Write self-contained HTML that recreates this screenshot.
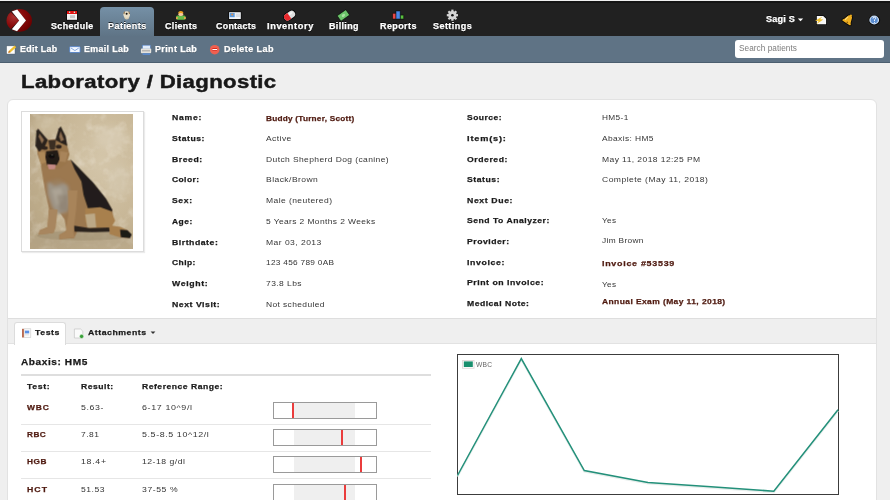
<!DOCTYPE html>
<html><head><meta charset="utf-8"><style>
html,body{margin:0;padding:0;}
body{width:890px;height:500px;overflow:hidden;position:relative;background:#efefef;font-family:"Liberation Sans",sans-serif;}
.a{position:absolute;}
.t{position:absolute;transform-origin:0 0;white-space:nowrap;line-height:1;font-family:"Liberation Sans",sans-serif;}
#topbar{left:0;top:0;width:890px;height:36px;background:#212121;}
#topline{left:0;top:0;width:890px;height:1px;background:#f0f0f0;}
#topline2{left:0;top:1px;width:890px;height:2px;background:#151515;}
#ptab{left:100px;top:7px;width:54px;height:29px;border-radius:4px 4px 0 0;background:linear-gradient(#7590a6,#5f7486);}
#toolbar{left:0;top:36px;width:890px;height:26px;background:#5f7385;border-top:0;}
#toolbar2{left:0;top:62px;width:890px;height:1px;background:#4b5e6f;}
#search{left:735px;top:40px;width:149px;height:18px;background:#fff;border-radius:3px;}
#panel{left:7px;top:99px;width:868px;height:420px;background:#fff;border:1px solid #e2e2e2;border-radius:6px;}
#frame{left:21px;top:111px;width:121px;height:139px;background:#fff;border:1px solid #dcdcdc;box-shadow:1px 1px 1px rgba(0,0,0,.08);}
#tabbar{left:8px;top:318px;width:868px;height:24px;background:#efefef;border-top:1px solid #dedede;border-bottom:1px solid #e2e2e2;}
#tabtests{left:14px;top:322px;width:50px;height:22px;background:#fff;border:1px solid #dcdcdc;border-bottom:0;border-radius:3px 3px 0 0;}
#hr{left:21px;top:374px;width:410px;height:2px;background:#dedede;}
.sep{left:21px;width:410px;height:1px;background:#e6e6e6;}
.bar{left:273px;width:102px;height:15px;border:1px solid #9a9a9a;background:#fff;}
.rng{position:absolute;left:20.3px;width:61px;top:0;height:15px;background:#efefef;}
.mk{position:absolute;top:0;width:2px;height:15px;background:#ea3c3c;}
#chart{left:457px;top:354px;width:380px;height:139px;border:1px solid #3a3a3a;background:#fff;}

</style></head><body>
<div class="a" id="topbar"></div>
<div class="a" id="topline"></div>
<div class="a" id="topline2"></div>
<div class="a" id="ptab"></div>
<svg class="a" style="left:0;top:0" width="40" height="36" viewBox="0 0 40 36">
<defs><radialGradient id="lg" cx="0.3" cy="0.35" r="0.75"><stop offset="0" stop-color="#a83232"/><stop offset="0.5" stop-color="#8a0c0c"/><stop offset="1" stop-color="#6a0000"/></radialGradient></defs>
<ellipse cx="19.25" cy="20.45" rx="12.75" ry="11.35" fill="url(#lg)"/>
<polygon points="10.8,11.9 16.6,9.3 26.2,20.4 16.6,31.6 10.8,29 19.2,20.4" fill="#111" opacity=".8"/>
<polygon points="11.8,11.5 17.2,9.5 26,20.4 17,31.2 11.8,29.3 19.2,20.4" fill="#fff"/>
</svg>
<!-- nav icons -->
<svg class="a" style="left:60px;top:6px" width="420" height="18" viewBox="60 6 420 18">
 <!-- calendar -->
 <rect x="66.2" y="10.3" width="11.5" height="10.2" fill="#000" opacity=".7"/>
 <rect x="67" y="11" width="10" height="3" fill="#e01010"/>
 <rect x="67" y="14" width="10" height="5.8" fill="#f4f4f4"/>
 <circle cx="69.6" cy="12.2" r=".8" fill="#bfe"/><circle cx="74.4" cy="12.2" r=".8" fill="#bfe"/>
 <rect x="70" y="15.2" width="5" height="3" fill="#c8c8c8"/>
 <!-- patients -->
 <path d="M124 17 Q124.6 19.6 126.7 19.6 Q128.8 19.6 129.4 17 Z" fill="#d8ccb0"/>
 <circle cx="126.7" cy="14.6" r="3.3" fill="#e8dec6"/>
 <path d="M123.4 13.8 Q123.6 11.4 125 11.3 L124.4 14.2 Z M130 13.8 Q129.8 11.4 128.4 11.3 L129 14.2 Z" fill="#8a6a40"/>
 <circle cx="126.6" cy="13.7" r="1" fill="#111"/>
 <!-- clients -->
 <rect x="176" y="15.6" width="9.7" height="4.2" rx="1.6" fill="#66bb48"/>
 <rect x="176" y="17" width="1.7" height="2" rx=".6" fill="#f0a050"/><rect x="184" y="17" width="1.7" height="2" rx=".6" fill="#f0a050"/>
 <ellipse cx="180.8" cy="14.2" rx="2.4" ry="1.9" fill="#f6c8a0"/>
 <path d="M178.2 13.4 Q178 10.9 180.8 10.9 Q183.6 10.9 183.4 13.4 Q181 12.4 178.2 13.4 Z" fill="#f0a020"/>
 <!-- contacts -->
 <rect x="228.3" y="11.5" width="13.2" height="8.2" fill="#000" opacity=".75"/>
 <rect x="229.1" y="12.2" width="11.7" height="6.8" fill="#f2f4f8"/>
 <rect x="229.7" y="13" width="5" height="4.2" fill="#5a9ae0"/>
 <circle cx="232.2" cy="14.6" r="1.1" fill="#d89050"/>
 <rect x="235.8" y="13.5" width="4.2" height="3.5" fill="#d8dce4"/>
 <!-- inventory pill -->
 <g transform="translate(289.6 15.6) rotate(-35)">
  <rect x="-6.9" y="-4.3" width="13.8" height="8.6" rx="4.3" fill="#000" opacity=".85"/>
  <rect x="-6" y="-3.4" width="12" height="6.8" rx="3.4" fill="#dedede"/>
  <path d="M-2.6 -3.4 L-0.4 -3.4 L-0.4 3.4 L-2.6 3.4 A3.4 3.4 0 0 1 -2.6 -3.4 Z" fill="#e8282c"/>
  <ellipse cx="2.2" cy="-1.2" rx="2.2" ry="1" fill="#f4f4f4"/>
 </g>
 <!-- billing -->
 <g transform="translate(343.4 15.4) rotate(-35)">
  <rect x="-5.3" y="-3.3" width="10.6" height="6.6" fill="#6cc46a" stroke="#000" stroke-opacity=".6" stroke-width=".9"/>
  <ellipse cx="0" cy="0" rx="1.8" ry="1.3" fill="#a8e0a0"/>
 </g>
 <!-- reports -->
 <g stroke="#000" stroke-opacity=".55" stroke-width=".9">
 <rect x="392.6" y="13.3" width="3.4" height="5.7" fill="#e84848"/>
 <rect x="400.2" y="15.1" width="3.5" height="3.9" fill="#5cc040"/>
 <rect x="396" y="11" width="4.2" height="8" fill="#4a88e8"/>
 </g>
 <!-- settings gear -->
 <g transform="translate(452.4 15.2)" fill="#d4d4d4">
  <circle r="4.2" fill="#d4d4d4"/>
  <g><rect x="-1.1" y="-5.6" width="2.2" height="11.2"/><rect x="-5.6" y="-1.1" width="11.2" height="2.2"/>
  <rect x="-1.1" y="-5.6" width="2.2" height="11.2" transform="rotate(45)"/><rect x="-1.1" y="-5.6" width="2.2" height="11.2" transform="rotate(-45)"/></g>
  <circle r="1.3" fill="#111"/>
 </g>
</svg>
<!-- toolbar -->
<div class="a" id="toolbar"></div>
<div class="a" id="toolbar2"></div>
<svg class="a" style="left:0;top:36px" width="230" height="26" viewBox="0 36 230 26">
 <!-- edit -->
 <rect x="6.6" y="45.9" width="8.4" height="8.1" fill="#fdfdfd" stroke="#4a5a6a" stroke-width=".4"/>
 <path d="M8.2 52.8 L9 50.8 L14.6 45.6 L16.2 47.2 L10.6 52.2 Z" fill="#f0c030"/>
 <path d="M8.2 52.8 L9 50.8 L10.6 52.2 Z" fill="#c06020"/>
 <!-- email -->
 <rect x="69.7" y="46.6" width="10.4" height="5.9" rx=".8" fill="#f4f8ff" stroke="#4a7cc8" stroke-width=".8"/>
 <path d="M71 48 L74.9 50.6 L78.8 48" fill="none" stroke="#7aa0dc" stroke-width=".9"/>
 <!-- print -->
 <rect x="142.5" y="45.2" width="7.8" height="3.8" fill="#e0ecfa" stroke="#4a7cc8" stroke-width=".5"/>
 <rect x="140.9" y="48.6" width="10.3" height="4.6" rx="1" fill="#e4e2dc"/>
 <rect x="142" y="50.6" width="8" height=".6" fill="#777"/>
 <rect x="142.6" y="53.2" width="7.5" height="1.8" fill="#5a88c8"/>
 <!-- delete -->
 <circle cx="214.7" cy="49.7" r="4.8" fill="#f06050"/>
 <rect x="212.4" y="48.2" width="4.6" height="2.6" fill="#d81c10"/>
 <rect x="212.4" y="49" width="4.6" height="1.1" fill="#fff"/>
</svg>
<div class="a" id="search"></div>
<!-- user icons -->
<svg class="a" style="left:795px;top:10px" width="95" height="20" viewBox="795 10 95 20">
 <path d="M797.8 18.6 L803.2 18.6 L800.5 21.2 Z" fill="#fff"/>
 <path d="M816 15.3 L823.6 15.3 L827 18.3 L827 25 L816 25 Z" fill="#000" opacity=".7"/>
 <path d="M816.8 16 L823.2 16 L826.1 18.7 L826.1 24.3 L816.8 24.3 Z" fill="#f8f8f8"/>
 <path d="M822.5 16.6 L815 20.8 L818.6 21 L816.6 24 L823.4 19.4 L820 19.2 Z" fill="#f0c030"/>
 <g transform="translate(848.2 19.8) rotate(33)">
  <path d="M-1.4 -3.5 Q0 -4.8 1.4 -3.5 L2.9 1.2 Q3.4 2.5 4.1 3 L-4.1 3 Q-3.4 2.5 -2.9 1.2 Z" fill="#000" opacity=".8" stroke="#000" stroke-width="3.2" stroke-linejoin="round"/>
  <path d="M-1.4 -3.5 Q0 -4.8 1.4 -3.5 L2.9 1.2 Q3.4 2.5 4.1 3 L-4.1 3 Q-3.4 2.5 -2.9 1.2 Z" fill="#f0b020" stroke="#f0b020" stroke-width="1.6" stroke-linejoin="round"/>
  <path d="M-1.8 -2.5 L-2.6 1.8" stroke="#fae090" stroke-width="1"/>
  <circle cx="0" cy="-5" r="1" fill="#f0b020"/>
  <circle cx="0.6" cy="2.6" r=".8" fill="#8a5a10"/>
 </g>
 <ellipse cx="874.4" cy="20.1" rx="5.8" ry="5.2" fill="#000" opacity=".8"/>
 <ellipse cx="874.2" cy="20" rx="4.9" ry="4.4" fill="#c8dcf4"/>
 <ellipse cx="874.2" cy="20" rx="3.6" ry="3.2" fill="#5a8cd0"/>
 <path d="M873 18.6 Q873 17.2 874.4 17.2 Q875.8 17.2 875.6 18.5 Q875.4 19.3 874.5 19.8 L874.5 20.9" fill="none" stroke="#fff" stroke-width="1"/>
 <circle cx="874.5" cy="22.2" r=".55" fill="#fff"/>
</svg>
<div class="a" id="panel"></div>
<div class="a" id="frame"></div>
<svg class="a" id="photo" style="left:30px;top:114px" width="103" height="135" viewBox="0 0 381 500" preserveAspectRatio="none">
 <defs>
  <radialGradient id="bgg" cx="0.7" cy="0.35" r="0.85"><stop offset="0" stop-color="#d4c6aa"/><stop offset="0.55" stop-color="#c8b797"/><stop offset="1" stop-color="#b5a383"/></radialGradient>
  <filter id="bl" x="-5%" y="-5%" width="110%" height="110%"><feGaussianBlur stdDeviation="2.6"/></filter>
  <filter id="bl3" x="-20%" y="-20%" width="140%" height="140%"><feGaussianBlur stdDeviation="6"/></filter>
  <filter id="bl2"><feGaussianBlur stdDeviation="14"/></filter>
  <filter id="tx" x="0" y="0" width="100%" height="100%"><feTurbulence type="fractalNoise" baseFrequency="0.025" numOctaves="3" seed="7"/><feColorMatrix type="matrix" values="0 0 0 0 0.95  0 0 0 0 0.92  0 0 0 0 0.85  0 0 0 1.6 -0.75"/></filter>
 </defs>
 <rect width="381" height="500" fill="url(#bgg)"/>
 <rect width="381" height="500" filter="url(#tx)" opacity=".45"/>
 <g filter="url(#bl2)" opacity=".55">
  <ellipse cx="300" cy="90" rx="60" ry="40" fill="#ddd2bc"/>
  <ellipse cx="60" cy="40" rx="50" ry="30" fill="#d0c2a4"/>
  <ellipse cx="330" cy="250" rx="40" ry="60" fill="#d6cab2"/>
  <ellipse cx="40" cy="330" rx="40" ry="70" fill="#bcaa88"/>
  <ellipse cx="190" cy="470" rx="190" ry="30" fill="#b0a084"/>
 </g>
 <g filter="url(#bl)">
 <ellipse cx="200" cy="450" rx="175" ry="18" fill="#9a8a6c" opacity=".5"/>
 <!-- neck/body tan base -->
 <path d="M40 190 L150 170 L190 220 L240 265 L285 320 L305 360 L310 400 L295 425 L240 432 L175 435 L163 460 L108 464 L108 448 L135 432 L128 390 L110 365 L100 360 L92 420 L85 440 L32 447 L36 430 L66 418 L70 350 L55 280 Z" fill="#9c7850"/>
 <!-- saddle -->
 <path d="M150 168 L181 200 L234 254 L280 312 L305 355 L300 365 L255 348 L215 352 L198 300 L190 250 L165 205 Z" fill="#241e1a"/>
 <!-- chest -->
 <g filter="url(#bl3)">
 <path d="M64 255 L105 242 L140 265 L150 320 L140 362 L105 372 L82 345 L66 300 Z" fill="#9e9486"/>
 <path d="M80 280 L115 275 L125 320 L100 340 Z" fill="#b8b0a2" opacity=".6"/>
 <path d="M100 300 L140 300 L140 360 L110 360 Z" fill="#857868" opacity=".5"/>
 <path d="M66 250 L100 238 L125 258 L90 266 Z" fill="#9a7a54" opacity=".8"/>
 </g>
 <!-- haunch -->
 <path d="M204 350 L260 345 L300 360 L315 395 L300 420 L220 423 L204 400 Z" fill="#a8804e"/>
 <path d="M204 372 L240 368 L245 420 L212 422 Z" fill="#bca886"/>
 <!-- under dark -->
 <path d="M163 414 L220 423 L304 420 L304 436 L230 438 L165 436 Z" fill="#2a221c"/>
 <!-- tail -->
 <path d="M292 412 L335 418 L360 430 L374 446 L368 460 L330 456 L295 445 Z" fill="#a8804e"/>
 <path d="M333 428 L360 430 L376 446 L370 460 L336 456 Z" fill="#1e1a18"/>
 <!-- front legs -->
 <path d="M140 283 L176 283 L170 360 L160 435 L165 458 L108 464 L110 446 L132 436 L142 370 Z" fill="#a8845a"/>
 <path d="M70 353 L102 353 L95 420 L88 440 L32 447 L35 432 L64 420 Z" fill="#a8865e"/>
 <!-- head -->
 <path d="M26 118 L60 96 L100 92 L136 112 L146 150 L136 182 L108 202 L70 206 L42 190 L28 150 Z" fill="#9a764c"/>
 <!-- ears -->
 <path d="M20 118 L24 62 L30 54 L66 96 L55 120 L34 140 Z" fill="#2c241e"/>
 <path d="M32 84 L35 72 L52 96 L44 110 Z" fill="#8e6e50"/>
 <path d="M94 96 L106 54 L114 46 L132 82 L138 118 L112 106 Z" fill="#2c241e"/>
 <path d="M108 84 L113 64 L126 96 L114 102 Z" fill="#8e6e50"/>
 <!-- face -->
 <path d="M68 98 L96 96 L92 132 L74 132 Z" fill="#3a2e24"/>
 <ellipse cx="55" cy="126" rx="11" ry="7" fill="#2e241c"/>
 <ellipse cx="106" cy="121" rx="11" ry="7" fill="#2e241c"/>
 <path d="M60 138 L102 134 L110 168 L98 190 L64 190 L56 166 Z" fill="#241c16"/>
 <path d="M30 140 L54 140 L60 178 L40 186 Z" fill="#ad8858"/>
 <path d="M112 138 L140 142 L132 178 L108 176 Z" fill="#a8845a"/>
 <ellipse cx="80" cy="156" rx="11" ry="7" fill="#0e0c0a"/>
 <ellipse cx="82" cy="152" rx="4" ry="2" fill="#5a5550"/>
 <!-- tongue -->
 <path d="M64 186 L96 188 L92 204 L70 205 Z" fill="#c48a84"/>
 </g>
</svg>
<div class="a" id="tabbar"></div>
<div class="a" id="tabtests"></div>
<svg class="a" style="left:18px;top:325px" width="70" height="16" viewBox="18 325 70 16">
 <rect x="24" y="328.8" width="6.8" height="8.7" fill="#fafafa" stroke="#c8c8c8" stroke-width=".6"/>
 <rect x="22" y="328.8" width="1.9" height="8.7" fill="#b86a50"/>
 <rect x="24.9" y="330.6" width="4.3" height="2.8" fill="#5a90e4"/><rect x="25" y="334.6" width="4" height=".6" fill="#ccc"/>
 <path d="M74.4 329 L80.6 329 L82.8 331.2 L82.8 338 L74.4 338 Z" fill="#fafafa" stroke="#c4c4c4" stroke-width=".7"/>
 <circle cx="81.6" cy="336.4" r="2.1" fill="#38a038" stroke="#fff" stroke-width=".5"/>
 <path d="M150.7 332 L155.3 332 L153 334.3 Z" fill="#333" transform="translate(0 0)"/>
</svg>
<svg class="a" style="left:148px;top:330px" width="10" height="6" viewBox="148 330 10 6"><path d="M150.6 331.6 L155.4 331.6 L153 334 Z" fill="#333"/></svg>
<div class="a" id="hr"></div>
<div class="a sep" style="top:424px"></div>
<div class="a sep" style="top:451px"></div>
<div class="a sep" style="top:478px"></div>
<div class="a bar" style="top:402px"><div class="rng"></div><div class="mk" style="left:18.2px"></div></div>
<div class="a bar" style="top:429px"><div class="rng"></div><div class="mk" style="left:67px"></div></div>
<div class="a bar" style="top:456px"><div class="rng"></div><div class="mk" style="left:85.5px"></div></div>
<div class="a bar" style="top:484px"><div class="rng"></div><div class="mk" style="left:69.8px"></div></div>
<svg class="a" style="left:440px;top:345px" width="410" height="155" viewBox="440 345 410 155">
 <rect x="457.5" y="354.5" width="381" height="140" fill="#fff" stroke="#3c3c3c" stroke-width="1"/>
 <rect x="462.5" y="360.5" width="11.5" height="7.8" fill="#fff" stroke="#e4dcdc" stroke-width="1"/>
 <rect x="463.8" y="361.4" width="9" height="5.6" fill="#1a8f6e"/>
 <polyline points="457.5,475.5 521.3,358.6 584.3,470.6 648,482.6 711,486.8 773.8,491.2 838,409.8" fill="none" stroke="#e8eeec" stroke-width="2" transform="translate(0 1)"/>
 <polyline points="457.5,475.5 521.3,358.6 584.3,470.6 648,482.6 711,486.8 773.8,491.2 838,409.8" fill="none" stroke="#23907a" stroke-width="1.5"/>
</svg>

<div class="t" id="n1" style="left:51.16px;top:21.89px;font-size:8.40px;font-weight:700;-webkit-text-stroke:0.25px #fff;color:#fff;letter-spacing:0.375px;transform:scaleX(1.0612);text-shadow:0 -1px 0 rgba(0,0,0,.7),0 1px 0 rgba(0,0,0,.7);">Schedule</div>
<div class="t" id="n2" style="left:107.66px;top:21.89px;font-size:8.40px;font-weight:700;-webkit-text-stroke:0.25px #fff;color:#fff;letter-spacing:0.416px;transform:scaleX(1.0788);text-shadow:0 -1px 0 rgba(0,0,0,.7),0 1px 0 rgba(0,0,0,.7);">Patients</div>
<div class="t" id="n3" style="left:164.96px;top:21.89px;font-size:8.40px;font-weight:700;-webkit-text-stroke:0.25px #fff;color:#fff;letter-spacing:0.350px;transform:scaleX(1.0654);text-shadow:0 -1px 0 rgba(0,0,0,.7),0 1px 0 rgba(0,0,0,.7);">Clients</div>
<div class="t" id="n4" style="left:215.56px;top:21.89px;font-size:8.40px;font-weight:700;-webkit-text-stroke:0.25px #fff;color:#fff;letter-spacing:0.310px;transform:scaleX(1.0522);text-shadow:0 -1px 0 rgba(0,0,0,.7),0 1px 0 rgba(0,0,0,.7);">Contacts</div>
<div class="t" id="n5" style="left:266.56px;top:21.89px;font-size:8.40px;font-weight:700;-webkit-text-stroke:0.25px #fff;color:#fff;letter-spacing:0.536px;transform:scaleX(1.1026);text-shadow:0 -1px 0 rgba(0,0,0,.7),0 1px 0 rgba(0,0,0,.7);">Inventory</div>
<div class="t" id="n6" style="left:329.36px;top:21.89px;font-size:8.40px;font-weight:700;-webkit-text-stroke:0.25px #fff;color:#fff;letter-spacing:0.335px;transform:scaleX(1.0687);text-shadow:0 -1px 0 rgba(0,0,0,.7),0 1px 0 rgba(0,0,0,.7);">Billing</div>
<div class="t" id="n7" style="left:380.36px;top:21.89px;font-size:8.40px;font-weight:700;-webkit-text-stroke:0.25px #fff;color:#fff;letter-spacing:0.407px;transform:scaleX(1.0674);text-shadow:0 -1px 0 rgba(0,0,0,.7),0 1px 0 rgba(0,0,0,.7);">Reports</div>
<div class="t" id="n8" style="left:433.46px;top:21.89px;font-size:8.40px;font-weight:700;-webkit-text-stroke:0.25px #fff;color:#fff;letter-spacing:0.412px;transform:scaleX(1.0770);text-shadow:0 -1px 0 rgba(0,0,0,.7),0 1px 0 rgba(0,0,0,.7);">Settings</div>
<div class="t" id="user" style="left:765.65px;top:14.95px;font-size:8.80px;font-weight:700;-webkit-text-stroke:0.25px #fff;color:#fff;letter-spacing:0.214px;transform:scaleX(1.0336);text-shadow:0 -1px 0 rgba(0,0,0,.5);">Sagi S</div>
<div class="t" id="tb1" style="left:20.06px;top:45.39px;font-size:8.40px;font-weight:700;-webkit-text-stroke:0.25px #fff;color:#fff;letter-spacing:0.302px;transform:scaleX(1.0552);text-shadow:0 1px 0 rgba(0,0,0,.3);">Edit Lab</div>
<div class="t" id="tb2" style="left:84.16px;top:45.39px;font-size:8.40px;font-weight:700;-webkit-text-stroke:0.25px #fff;color:#fff;letter-spacing:0.334px;transform:scaleX(1.0584);text-shadow:0 1px 0 rgba(0,0,0,.3);">Email Lab</div>
<div class="t" id="tb3" style="left:155.36px;top:45.39px;font-size:8.40px;font-weight:700;-webkit-text-stroke:0.25px #fff;color:#fff;letter-spacing:0.354px;transform:scaleX(1.0682);text-shadow:0 1px 0 rgba(0,0,0,.3);">Print Lab</div>
<div class="t" id="tb4" style="left:223.66px;top:45.39px;font-size:8.40px;font-weight:700;-webkit-text-stroke:0.25px #fff;color:#fff;letter-spacing:0.406px;transform:scaleX(1.0759);text-shadow:0 1px 0 rgba(0,0,0,.3);">Delete Lab</div>
<div class="t" id="srch" style="left:738.67px;top:44.96px;font-size:8.20px;color:#7c7c7c;letter-spacing:0.039px;transform:scaleX(1.0079);">Search patients</div>
<div class="t" id="title" style="left:20.97px;top:72.81px;font-size:18.30px;font-weight:700;-webkit-text-stroke:0.45px #181818;color:#181818;letter-spacing:0.287px;transform:scaleX(1.2124);">Laboratory / Diagnostic</div>
<div class="t" id="ll0" style="left:171.79px;top:113.85px;font-size:7.85px;font-weight:700;-webkit-text-stroke:0.25px #1a1a1a;color:#1a1a1a;letter-spacing:0.676px;transform:scaleX(1.1016);">Name:</div>
<div class="t" id="ll1" style="left:171.79px;top:134.65px;font-size:7.85px;font-weight:700;-webkit-text-stroke:0.25px #1a1a1a;color:#1a1a1a;letter-spacing:0.485px;transform:scaleX(1.0982);">Status:</div>
<div class="t" id="ll2" style="left:171.79px;top:155.65px;font-size:7.85px;font-weight:700;-webkit-text-stroke:0.25px #1a1a1a;color:#1a1a1a;letter-spacing:0.536px;transform:scaleX(1.0967);">Breed:</div>
<div class="t" id="ll3" style="left:171.79px;top:175.95px;font-size:7.85px;font-weight:700;-webkit-text-stroke:0.25px #1a1a1a;color:#1a1a1a;letter-spacing:0.399px;transform:scaleX(1.0761);">Color:</div>
<div class="t" id="ll4" style="left:171.79px;top:196.65px;font-size:7.85px;font-weight:700;-webkit-text-stroke:0.25px #1a1a1a;color:#1a1a1a;letter-spacing:0.574px;transform:scaleX(1.0929);">Sex:</div>
<div class="t" id="ll5" style="left:171.79px;top:217.95px;font-size:7.85px;font-weight:700;-webkit-text-stroke:0.25px #1a1a1a;color:#1a1a1a;letter-spacing:0.473px;transform:scaleX(1.0713);">Age:</div>
<div class="t" id="ll6" style="left:171.79px;top:238.65px;font-size:7.85px;font-weight:700;-webkit-text-stroke:0.25px #1a1a1a;color:#1a1a1a;letter-spacing:0.484px;transform:scaleX(1.1063);">Birthdate:</div>
<div class="t" id="ll7" style="left:171.79px;top:258.95px;font-size:7.85px;font-weight:700;-webkit-text-stroke:0.25px #1a1a1a;color:#1a1a1a;letter-spacing:0.429px;transform:scaleX(1.0753);">Chip:</div>
<div class="t" id="ll8" style="left:171.79px;top:279.95px;font-size:7.85px;font-weight:700;-webkit-text-stroke:0.25px #1a1a1a;color:#1a1a1a;letter-spacing:0.576px;transform:scaleX(1.1097);">Weight:</div>
<div class="t" id="ll9" style="left:171.79px;top:300.75px;font-size:7.85px;font-weight:700;-webkit-text-stroke:0.25px #1a1a1a;color:#1a1a1a;letter-spacing:0.469px;transform:scaleX(1.1116);">Next Visit:</div>
<div class="t" id="lv0" style="left:266.19px;top:115.25px;font-size:7.85px;font-weight:700;-webkit-text-stroke:0.25px #4f1a10;color:#4f1a10;letter-spacing:0.225px;transform:scaleX(1.0486);">Buddy (Turner, Scott)</div>
<div class="t" id="lv1" style="left:266.19px;top:134.65px;font-size:7.85px;color:#353535;letter-spacing:0.399px;transform:scaleX(1.0826);">Active</div>
<div class="t" id="lv2" style="left:266.19px;top:155.65px;font-size:7.85px;color:#353535;letter-spacing:0.370px;transform:scaleX(1.0820);">Dutch Shepherd Dog (canine)</div>
<div class="t" id="lv3" style="left:266.19px;top:175.95px;font-size:7.85px;color:#353535;letter-spacing:0.416px;transform:scaleX(1.0847);">Black/Brown</div>
<div class="t" id="lv4" style="left:266.19px;top:196.65px;font-size:7.85px;color:#353535;letter-spacing:0.384px;transform:scaleX(1.0863);">Male (neutered)</div>
<div class="t" id="lv5" style="left:266.19px;top:217.95px;font-size:7.85px;color:#353535;letter-spacing:0.356px;transform:scaleX(1.0774);">5 Years 2 Months 2 Weeks</div>
<div class="t" id="lv6" style="left:266.19px;top:238.65px;font-size:7.85px;color:#353535;letter-spacing:0.417px;transform:scaleX(1.0882);">Mar 03, 2013</div>
<div class="t" id="lv7" style="left:266.19px;top:258.95px;font-size:7.85px;color:#353535;letter-spacing:0.275px;transform:scaleX(1.0547);">123 456 789 0AB</div>
<div class="t" id="lv8" style="left:266.19px;top:279.95px;font-size:7.85px;color:#353535;letter-spacing:0.400px;transform:scaleX(1.0823);">73.8 Lbs</div>
<div class="t" id="lv9" style="left:266.19px;top:300.75px;font-size:7.85px;color:#353535;letter-spacing:0.356px;transform:scaleX(1.0749);">Not scheduled</div>
<div class="t" id="rl0" style="left:467.29px;top:114.15px;font-size:7.85px;font-weight:700;-webkit-text-stroke:0.25px #1a1a1a;color:#1a1a1a;letter-spacing:0.448px;transform:scaleX(1.0813);">Source:</div>
<div class="t" id="rl1" style="left:467.29px;top:134.55px;font-size:7.85px;font-weight:700;-webkit-text-stroke:0.25px #1a1a1a;color:#1a1a1a;letter-spacing:0.711px;transform:scaleX(1.1679);">Item(s):</div>
<div class="t" id="rl2" style="left:467.29px;top:155.65px;font-size:7.85px;font-weight:700;-webkit-text-stroke:0.25px #1a1a1a;color:#1a1a1a;letter-spacing:0.519px;transform:scaleX(1.0986);">Ordered:</div>
<div class="t" id="rl3" style="left:467.29px;top:176.05px;font-size:7.85px;font-weight:700;-webkit-text-stroke:0.25px #1a1a1a;color:#1a1a1a;letter-spacing:0.500px;transform:scaleX(1.1016);">Status:</div>
<div class="t" id="rl4" style="left:467.29px;top:197.15px;font-size:7.85px;font-weight:700;-webkit-text-stroke:0.25px #1a1a1a;color:#1a1a1a;letter-spacing:0.550px;transform:scaleX(1.1090);">Next Due:</div>
<div class="t" id="rl5" style="left:467.29px;top:217.25px;font-size:7.85px;font-weight:700;-webkit-text-stroke:0.25px #1a1a1a;color:#1a1a1a;letter-spacing:0.461px;transform:scaleX(1.0982);">Send To Analyzer:</div>
<div class="t" id="rl6" style="left:467.29px;top:238.35px;font-size:7.85px;font-weight:700;-webkit-text-stroke:0.25px #1a1a1a;color:#1a1a1a;letter-spacing:0.473px;transform:scaleX(1.0988);">Provider:</div>
<div class="t" id="rl7" style="left:467.29px;top:258.85px;font-size:7.85px;font-weight:700;-webkit-text-stroke:0.25px #1a1a1a;color:#1a1a1a;letter-spacing:0.539px;transform:scaleX(1.1163);">Invoice:</div>
<div class="t" id="rl8" style="left:467.29px;top:279.25px;font-size:7.85px;font-weight:700;-webkit-text-stroke:0.25px #1a1a1a;color:#1a1a1a;letter-spacing:0.469px;transform:scaleX(1.1109);">Print on Invoice:</div>
<div class="t" id="rl9" style="left:467.29px;top:300.35px;font-size:7.85px;font-weight:700;-webkit-text-stroke:0.25px #1a1a1a;color:#1a1a1a;letter-spacing:0.456px;transform:scaleX(1.0962);">Medical Note:</div>
<div class="t" id="rv0" style="left:602.49px;top:114.15px;font-size:7.85px;color:#353535;letter-spacing:0.360px;transform:scaleX(1.0526);">HM5-1</div>
<div class="t" id="rv1" style="left:602.49px;top:134.55px;font-size:7.85px;color:#353535;letter-spacing:0.361px;transform:scaleX(1.0712);">Abaxis: HM5</div>
<div class="t" id="rv2" style="left:602.49px;top:155.65px;font-size:7.85px;color:#353535;letter-spacing:0.391px;transform:scaleX(1.0838);">May 11, 2018 12:25 PM</div>
<div class="t" id="rv3" style="left:602.49px;top:176.05px;font-size:7.85px;color:#353535;letter-spacing:0.412px;transform:scaleX(1.0920);">Complete (May 11, 2018)</div>
<div class="t" id="rv5" style="left:602.49px;top:217.25px;font-size:7.85px;color:#353535;letter-spacing:0.343px;transform:scaleX(1.0458);">Yes</div>
<div class="t" id="rv6" style="left:602.49px;top:237.45px;font-size:7.85px;color:#353535;letter-spacing:0.310px;transform:scaleX(1.0587);">Jim Brown</div>
<div class="t" id="rv7" style="left:602.49px;top:260.35px;font-size:7.85px;font-weight:700;-webkit-text-stroke:0.25px #4f1a10;color:#4f1a10;letter-spacing:0.629px;transform:scaleX(1.1374);">Invoice #53539</div>
<div class="t" id="rv8" style="left:602.49px;top:281.45px;font-size:7.85px;color:#353535;letter-spacing:0.343px;transform:scaleX(1.0458);">Yes</div>
<div class="t" id="rv9" style="left:602.49px;top:298.05px;font-size:7.85px;font-weight:700;-webkit-text-stroke:0.25px #4f1a10;color:#4f1a10;letter-spacing:0.378px;transform:scaleX(1.0798);">Annual Exam (May 11, 2018)</div>
<div class="t" id="tab1" style="left:35.08px;top:329.33px;font-size:8.00px;font-weight:700;-webkit-text-stroke:0.25px #1a1a1a;color:#1a1a1a;letter-spacing:0.515px;transform:scaleX(1.0906);">Tests</div>
<div class="t" id="tab2" style="left:88.08px;top:329.33px;font-size:8.00px;font-weight:700;-webkit-text-stroke:0.25px #1a1a1a;color:#1a1a1a;letter-spacing:0.487px;transform:scaleX(1.0896);">Attachments</div>
<div class="t" id="abx" style="left:20.83px;top:357.93px;font-size:9.30px;font-weight:700;-webkit-text-stroke:0.25px #181818;color:#181818;letter-spacing:0.533px;transform:scaleX(1.0847);">Abaxis: HM5</div>
<div class="t" id="th1" style="left:26.59px;top:383.05px;font-size:7.85px;font-weight:700;-webkit-text-stroke:0.25px #1a1a1a;color:#1a1a1a;letter-spacing:0.549px;transform:scaleX(1.1097);">Test:</div>
<div class="t" id="th2" style="left:80.69px;top:383.05px;font-size:7.85px;font-weight:700;-webkit-text-stroke:0.25px #1a1a1a;color:#1a1a1a;letter-spacing:0.462px;transform:scaleX(1.0932);">Result:</div>
<div class="t" id="th3" style="left:142.19px;top:383.05px;font-size:7.85px;font-weight:700;-webkit-text-stroke:0.25px #1a1a1a;color:#1a1a1a;letter-spacing:0.466px;transform:scaleX(1.0938);">Reference Range:</div>
<div class="t" id="r0a" style="left:26.59px;top:404.35px;font-size:7.85px;font-weight:700;-webkit-text-stroke:0.25px #4f1a10;color:#4f1a10;letter-spacing:0.785px;transform:scaleX(1.0736);">WBC</div>
<div class="t" id="r0b" style="left:80.69px;top:404.35px;font-size:7.85px;color:#353535;letter-spacing:0.568px;transform:scaleX(1.1159);">5.63-</div>
<div class="t" id="r0c" style="left:142.19px;top:404.35px;font-size:7.85px;color:#353535;letter-spacing:0.554px;transform:scaleX(1.1332);">6-17 10^9/l</div>
<div class="t" id="r1a" style="left:26.59px;top:431.05px;font-size:7.85px;font-weight:700;-webkit-text-stroke:0.25px #4f1a10;color:#4f1a10;letter-spacing:0.447px;transform:scaleX(1.0450);">RBC</div>
<div class="t" id="r1b" style="left:80.69px;top:431.05px;font-size:7.85px;color:#353535;letter-spacing:0.446px;transform:scaleX(1.0771);">7.81</div>
<div class="t" id="r1c" style="left:142.19px;top:431.05px;font-size:7.85px;color:#353535;letter-spacing:0.526px;transform:scaleX(1.1319);">5.5-8.5 10^12/l</div>
<div class="t" id="r2a" style="left:26.59px;top:458.05px;font-size:7.85px;font-weight:700;-webkit-text-stroke:0.25px #4f1a10;color:#4f1a10;letter-spacing:0.539px;transform:scaleX(1.0532);">HGB</div>
<div class="t" id="r2b" style="left:80.69px;top:458.05px;font-size:7.85px;color:#353535;letter-spacing:0.644px;transform:scaleX(1.1187);">18.4+</div>
<div class="t" id="r2c" style="left:142.19px;top:458.05px;font-size:7.85px;color:#353535;letter-spacing:0.444px;transform:scaleX(1.1033);">12-18 g/dl</div>
<div class="t" id="r3a" style="left:26.59px;top:486.15px;font-size:7.85px;font-weight:700;-webkit-text-stroke:0.25px #4f1a10;color:#4f1a10;letter-spacing:0.962px;transform:scaleX(1.1081);">HCT</div>
<div class="t" id="r3b" style="left:80.69px;top:486.15px;font-size:7.85px;color:#353535;letter-spacing:0.488px;transform:scaleX(1.0884);">51.53</div>
<div class="t" id="r3c" style="left:142.19px;top:486.15px;font-size:7.85px;color:#353535;letter-spacing:0.533px;transform:scaleX(1.0983);">37-55 %</div>
<div class="t" id="leg" style="left:476.14px;top:361.90px;font-size:6.50px;color:#666;letter-spacing:0.222px;transform:scaleX(1.0246);">WBC</div>
</body></html>
